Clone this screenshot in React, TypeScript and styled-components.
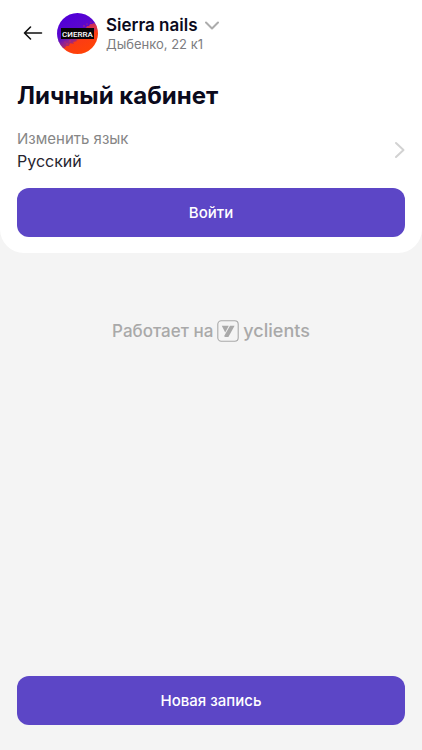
import React from "react";
import styled, { createGlobalStyle } from "styled-components";

const GlobalStyle = createGlobalStyle`
  *, *::before, *::after { box-sizing: border-box; }
  body {
    margin: 0;
    background: #f4f4f4;
    color: #0b0a1c;
    font-family: Inter, "Liberation Sans", sans-serif;
  }
  button { font-family: inherit; cursor: pointer; }
`;

const Page = styled.div`
  min-height: 100vh;
  display: flex;
  flex-direction: column;
`;

const Card = styled.section`
  padding: 10px 17px 16px;
  background: #fff;
  border-radius: 0 0 24px 24px;
`;

const Header = styled.header`
  display: flex;
  align-items: center;
  height: 46px;
`;

const BackButton = styled.button`
  display: flex;
  align-items: center;
  justify-content: center;
  width: 32px;
  height: 32px;
  margin-right: 8px;
  padding: 0;
  border: 0;
  background: none;
  color: #111;
`;

const Avatar = styled.svg`
  flex: none;
  width: 41px;
  height: 41px;
  margin-right: 8px;
`;

const BranchButton = styled.button`
  display: flex;
  flex-direction: column;
  align-items: flex-start;
  padding: 0;
  border: 0;
  background: none;
  color: inherit;
  text-align: left;
`;

const BranchName = styled.span`
  display: flex;
  align-items: center;
  gap: 7px;
  font-size: 17px;
  line-height: 22px;
  font-weight: 600;
`;

const BranchAddress = styled.span`
  font-size: 13px;
  line-height: 16px;
  color: #7c7c7f;
`;

const Title = styled.h1`
  margin: 24px 0 15px;
  font-size: 24px;
  line-height: 32px;
  font-weight: 700;
`;

const LanguageRow = styled.button`
  display: flex;
  align-items: center;
  justify-content: space-between;
  width: 100%;
  padding: 0;
  border: 0;
  background: none;
  color: #26252f;
  text-align: left;
`;

const LanguageText = styled.span`
  display: flex;
  flex-direction: column;
  font-size: 16px;
  line-height: 23px;
`;

const Muted = styled.span`
  color: #868686;
  font-size: 15px;
`;

const PrimaryButton = styled.button`
  display: block;
  width: 100%;
  height: 49px;
  padding: 0 16px;
  border: 0;
  border-radius: 12px;
  background: #5c46c6;
  color: #fff;
  font-size: 15px;
  line-height: 20px;
  font-weight: 500;
`;

const LoginButton = styled(PrimaryButton)`
  margin-top: 15px;
`;

const PoweredBy = styled.a`
  display: flex;
  align-items: center;
  align-self: center;
  gap: 4px;
  margin-top: 66px;
  color: #a9a9a9;
  font-size: 17px;
  line-height: 24px;
  font-weight: 500;
  text-decoration: none;
`;

const Brand = styled.span`
  font-size: 18px;
`;

const Footer = styled.footer`
  margin-top: auto;
  padding: 16px 17px 25px;
`;

const ArrowLeftIcon = () => (
  <svg width="20" height="16" viewBox="0 0 20 16" fill="none" stroke="currentColor" strokeWidth="1.6" strokeLinecap="round" strokeLinejoin="round" aria-hidden="true">
    <path d="M18.5 8H1.5M7.5 2 1.5 8l6 6" />
  </svg>
);

const ChevronDownIcon = () => (
  <svg width="14" height="9" viewBox="0 0 14 9" fill="none" stroke="#acacac" strokeWidth="2" strokeLinecap="round" strokeLinejoin="round" aria-hidden="true">
    <path d="m1 1.5 6 6 6-6" />
  </svg>
);

const ChevronRightIcon = () => (
  <svg width="11" height="18" viewBox="0 0 11 18" fill="none" stroke="#d2d2d2" strokeWidth="2" strokeLinecap="round" strokeLinejoin="round" aria-hidden="true">
    <path d="m2 2 7.5 7L2 16" />
  </svg>
);

const SalonAvatar = () => (
  <Avatar viewBox="0 0 41 41" role="img" aria-label="Sierra nails">
    <defs>
      <clipPath id="avatar-circle">
        <circle cx="20.5" cy="20.5" r="20.5" />
      </clipPath>
      <linearGradient id="avatar-paint" x1="0.3" y1="0.1" x2="0.72" y2="0.9">
        <stop offset="0" stopColor="#5200d6" />
        <stop offset="0.44" stopColor="#5c08cc" />
        <stop offset="0.56" stopColor="#b42878" />
        <stop offset="0.68" stopColor="#fb3c14" />
        <stop offset="1" stopColor="#ff4208" />
      </linearGradient>
    </defs>
    <g clipPath="url(#avatar-circle)">
      <rect width="41" height="41" fill="url(#avatar-paint)" />
      <path d="M0 25h22l-3 2 1 1-4 1 1 2-4-1-1 3-3 0-1 2-3 0-5 1z" fill="#6a1cb0" opacity="0.5" />
      <path d="M32 13l1-2 2 0 2-1 5 5H29l1-2z" fill="#f23c32" opacity="0.7" />
      <g fill="#d83058">
        <circle cx="27" cy="13" r="0.7" />
        <circle cx="30" cy="11" r="0.6" />
        <circle cx="34" cy="9" r="0.6" />
        <circle cx="13" cy="28" r="0.7" />
        <circle cx="10" cy="31" r="0.7" />
        <circle cx="8" cy="29" r="0.6" />
      </g>
    </g>
    <rect x="4" y="15" width="33" height="11" fill="#080508" />
    <text x="20.5" y="23.5" textAnchor="middle" fill="#fff" fontFamily="Roboto, sans-serif" fontSize="8" fontWeight="500">
      CИERRA
    </text>
  </Avatar>
);

const YclientsIcon = () => (
  <svg width="22" height="22" viewBox="0 0 22 22" aria-hidden="true">
    <rect x="0.8" y="0.8" width="20.4" height="20.4" rx="3.5" fill="none" stroke="currentColor" strokeWidth="1.1" />
    <path d="M4.8 5.8h7l-3.6 6.6z M13 5.8h4.6L11.4 17H7.8l-.6-1z" fill="currentColor" />
  </svg>
);

export default function App() {
  return (
    <Page>
      <GlobalStyle />
      <Card>
        <Header>
          <BackButton type="button" aria-label="Назад">
            <ArrowLeftIcon />
          </BackButton>
          <SalonAvatar />
          <BranchButton type="button">
            <BranchName>
              Sierra nails
              <ChevronDownIcon />
            </BranchName>
            <BranchAddress>Дыбенко, 22 к1</BranchAddress>
          </BranchButton>
        </Header>
        <Title>Личный кабинет</Title>
        <LanguageRow type="button">
          <LanguageText>
            <Muted>Изменить язык</Muted>
            <span>Русский</span>
          </LanguageText>
          <ChevronRightIcon />
        </LanguageRow>
        <LoginButton type="button">Войти</LoginButton>
      </Card>
      <PoweredBy href="#">
        <span>Работает на</span>
        <YclientsIcon />
        <Brand>yclients</Brand>
      </PoweredBy>
      <Footer>
        <PrimaryButton type="button">Новая запись</PrimaryButton>
      </Footer>
    </Page>
  );
}
